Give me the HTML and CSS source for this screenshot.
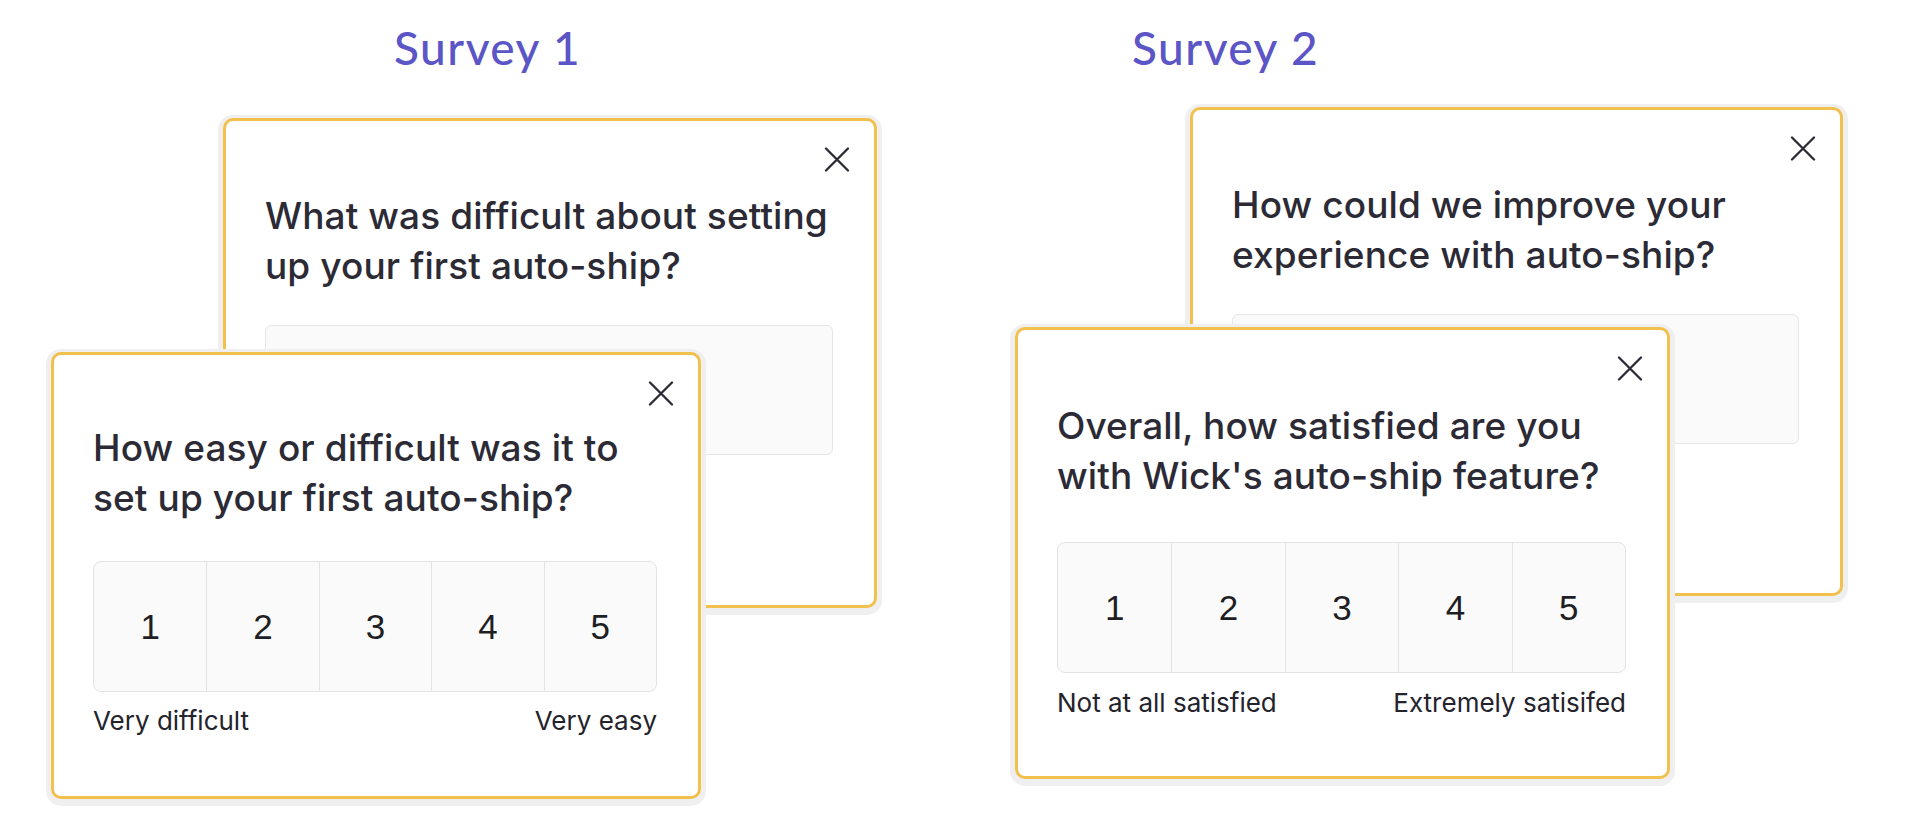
FILE: index.html
```html
<!DOCTYPE html>
<html lang="en">
<head>
    <meta charset="UTF-8">
    <meta name="viewport" content="width=device-width, initial-scale=1.0">
    <title>Auto-ship Surveys</title>
    <link rel="stylesheet" href="styles.css">
</head>
<body>
    <div class="board">
        <section class="survey survey-first">
            <h1 class="survey-title">Survey 1</h1>
            <div class="stack">
                <div class="card card-back">
                    <div class="card-top">
                        <button class="close" aria-label="Close">
                            <svg viewBox="0 0 26 25" width="26" height="25"><path d="M2 1.5 L24 23.5 M24 1.5 L2 23.5" /></svg>
                        </button>
                    </div>
                    <div class="card-body">
                        <h2 class="question">What was difficult about setting<br>up your first auto-ship?</h2>
                        <div class="answer-box"></div>
                    </div>
                </div>

                <div class="card card-front">
                    <div class="card-top">
                        <button class="close" aria-label="Close">
                            <svg viewBox="0 0 26 25" width="26" height="25"><path d="M2 1.5 L24 23.5 M24 1.5 L2 23.5" /></svg>
                        </button>
                    </div>
                    <div class="card-body">
                        <h2 class="question">How easy or difficult was it to<br>set up your first auto-ship?</h2>
                        <div class="scale">
                            <span class="scale-cell">1</span>
                            <span class="scale-cell">2</span>
                            <span class="scale-cell">3</span>
                            <span class="scale-cell">4</span>
                            <span class="scale-cell">5</span>
                        </div>
                        <div class="scale-labels">
                            <span>Very difficult</span>
                            <span>Very easy</span>
                        </div>
                    </div>
                </div>
            </div>
        </section>

        <section class="survey survey-second">
            <h1 class="survey-title">Survey 2</h1>
            <div class="stack">
                <div class="card card-back">
                    <div class="card-top">
                        <button class="close" aria-label="Close">
                            <svg viewBox="0 0 26 25" width="26" height="25"><path d="M2 1.5 L24 23.5 M24 1.5 L2 23.5" /></svg>
                        </button>
                    </div>
                    <div class="card-body">
                        <h2 class="question">How could we improve your<br>experience with auto-ship?</h2>
                        <div class="answer-box"></div>
                    </div>
                </div>

                <div class="card card-front">
                    <div class="card-top">
                        <button class="close" aria-label="Close">
                            <svg viewBox="0 0 26 25" width="26" height="25"><path d="M2 1.5 L24 23.5 M24 1.5 L2 23.5" /></svg>
                        </button>
                    </div>
                    <div class="card-body">
                        <h2 class="question">Overall, how satisfied are you<br>with Wick's auto-ship feature?</h2>
                        <div class="scale">
                            <span class="scale-cell">1</span>
                            <span class="scale-cell">2</span>
                            <span class="scale-cell">3</span>
                            <span class="scale-cell">4</span>
                            <span class="scale-cell">5</span>
                        </div>
                        <div class="scale-labels">
                            <span>Not at all satisfied</span>
                            <span>Extremely satisifed</span>
                        </div>
                    </div>
                </div>
            </div>
        </section>
    </div>
</body>
</html>
```

FILE: styles.css
```css
* {
    margin: 0;
    padding: 0;
    box-sizing: border-box;
}

body {
    background-color: #ffffff;
    font-family: Inter, "Noto Sans", sans-serif;
    color: #2b2a35;
}

.board {
    display: flex;
    align-items: flex-start;
    height: 830px;
    padding-left: 51px;
    overflow: hidden;
}

.survey {
    display: flex;
    flex-direction: column;
}

.survey-first {
    width: 826px;
}

.survey-second {
    width: 828px;
    margin-left: 138px;
}

.survey-title {
    margin-top: 20px;
    font-family: Lato, "Open Sans", sans-serif;
    font-size: 46px;
    line-height: 56px;
    font-weight: 500;
    letter-spacing: 1.5px;
    color: #5b55c6;
    white-space: nowrap;
}

.survey-first .survey-title {
    padding-left: 343px;
}

.survey-second .survey-title {
    padding-left: 117px;
}

/* both cards share one grid cell so the front one sits over the back one */
.stack {
    display: grid;
    margin-top: 42px;
}

.survey-second .stack {
    margin-top: 31px;
}

.card {
    grid-area: 1 / 1;
    align-self: start;
    justify-self: start;
    display: flex;
    flex-direction: column;
    background-color: #ffffff;
    border: 3px solid #f2c04d;
    border-radius: 10px;
    padding: 26px 24px 0 39px;
    box-shadow: 0 2px 0 5px #efefef;
}

.card-back {
    margin-left: 172px;
    width: 654px;
    height: 490px;
}

.card-front {
    margin-top: 234px;
    width: 650px;
    height: 447px;
}

.survey-second .card-back {
    margin-left: 175px;
    width: 653px;
    height: 489px;
}

.survey-second .card-front {
    margin-top: 220px;
    width: 655px;
    height: 452px;
}

.card-top {
    display: flex;
    justify-content: flex-end;
}

.close {
    width: 26px;
    height: 25px;
    background: none;
    border: none;
    cursor: pointer;
}

.close svg {
    display: block;
    fill: none;
    stroke: #2a2935;
    stroke-width: 2.3;
    stroke-linecap: round;
}

.card-body {
    padding-right: 17px;
}

.question {
    margin-top: 17px;
    font-size: 37px;
    line-height: 50px;
    font-weight: 500;
    letter-spacing: 0.1px;
    color: #2b2a35;
    white-space: nowrap;
}

.card-back .question {
    margin-top: 19px;
}

.survey-second .card-front .question {
    margin-top: 20px;
}

.answer-box {
    height: 130px;
    margin-top: 34px;
    background-color: #fafafa;
    border: 1.5px solid #e6e6e6;
    border-radius: 6px;
}

.scale {
    display: grid;
    grid-template-columns: repeat(5, 1fr);
    height: 131px;
    margin-top: 38px;
    background-color: #fafafa;
    border: 1.5px solid #e3e3e3;
    border-radius: 8px;
    overflow: hidden;
}

.survey-second .scale {
    margin-top: 41px;
}

.scale-cell {
    display: flex;
    align-items: center;
    justify-content: center;
    border-left: 1.5px solid #e3e3e3;
    font-family: "Liberation Sans", Arial, sans-serif;
    font-size: 35px;
    color: #1e1e24;
}

.scale-cell:first-child {
    border-left: none;
}

.scale-labels {
    display: flex;
    justify-content: space-between;
    margin-top: 14px;
    font-size: 26px;
    line-height: 30px;
    color: #24232c;
}

.survey-second .scale-labels {
    margin-top: 15px;
}
```
